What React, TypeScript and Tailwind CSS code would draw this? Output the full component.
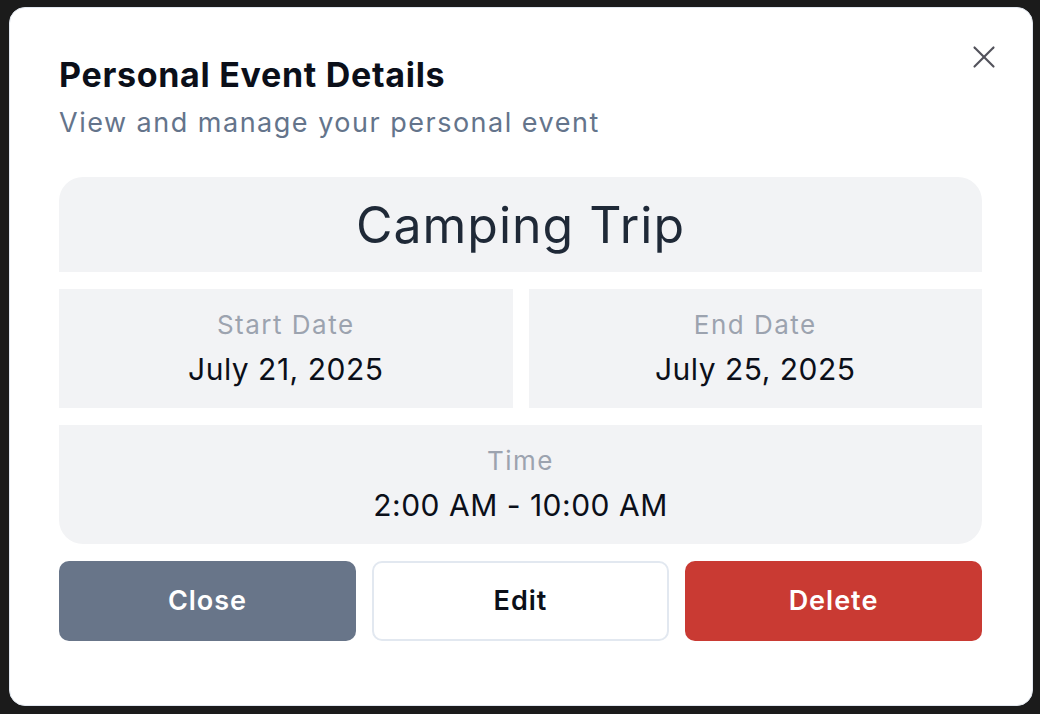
import { X } from 'lucide-react';

const font = { fontFamily: 'Inter, "Noto Sans", sans-serif' };

function InfoCell({ label, value }: { label: string; value: string }) {
  return (
    <div className="flex h-[119px] flex-col items-center justify-center bg-[#f2f3f5]">
      <div className="text-[26px] leading-[32px] tracking-[1.5px] text-[#9ca3af]">{label}</div>
      <div className="mt-[8px] text-[30px] leading-[40px] tracking-[0.5px] text-[#0b0f19]">{value}</div>
    </div>
  );
}

export default function App() {
  return (
    <div className="min-h-[714px] bg-[#1b1b1b] pl-[9px] pt-[7px]" style={font}>
      <div className="relative h-[699px] w-[1024px] rounded-[16px] border border-[#e2e8f0] bg-white pl-[49px] pr-[50px] pt-[49px]">
        {/* Close icon */}
        <button className="absolute right-[29px] top-[30px] text-[#52525b]">
          <X size={38} strokeWidth={1.35} />
        </button>

        {/* Header */}
        <h2 className="text-[34px] font-bold leading-[36px] tracking-[0.7px] text-[#0b0f19]">
          Personal Event Details
        </h2>
        <p className="mt-[14px] text-[27px] leading-[32px] tracking-[1.5px] text-[#64748b]">
          View and manage your personal event
        </p>

        {/* Details */}
        <div className="mt-[38px] flex flex-col gap-[17px] overflow-hidden rounded-[24px]">
          <div className="flex h-[95px] items-center justify-center bg-[#f2f3f5]">
            <span className="text-[50px] leading-[56px] tracking-[1px] text-[#1f2937]">Camping Trip</span>
          </div>
          <div className="grid grid-cols-2 gap-[16px]">
            <InfoCell label="Start Date" value="July 21, 2025" />
            <InfoCell label="End Date" value="July 25, 2025" />
          </div>
          <InfoCell label="Time" value="2:00 AM - 10:00 AM" />
        </div>

        {/* Actions */}
        <div className="mt-[17px] grid grid-cols-3 gap-[16px]">
          <button className="h-[80px] rounded-[10px] bg-[#687589] text-[27px] font-semibold tracking-[1px] text-white">
            Close
          </button>
          <button className="h-[80px] rounded-[10px] border-2 border-[#e2e8f0] bg-white text-[27px] font-semibold tracking-[1px] text-[#0b0f19]">
            Edit
          </button>
          <button className="h-[80px] rounded-[10px] bg-[#c93a33] text-[27px] font-semibold tracking-[1px] text-white">
            Delete
          </button>
        </div>
      </div>
    </div>
  );
}
